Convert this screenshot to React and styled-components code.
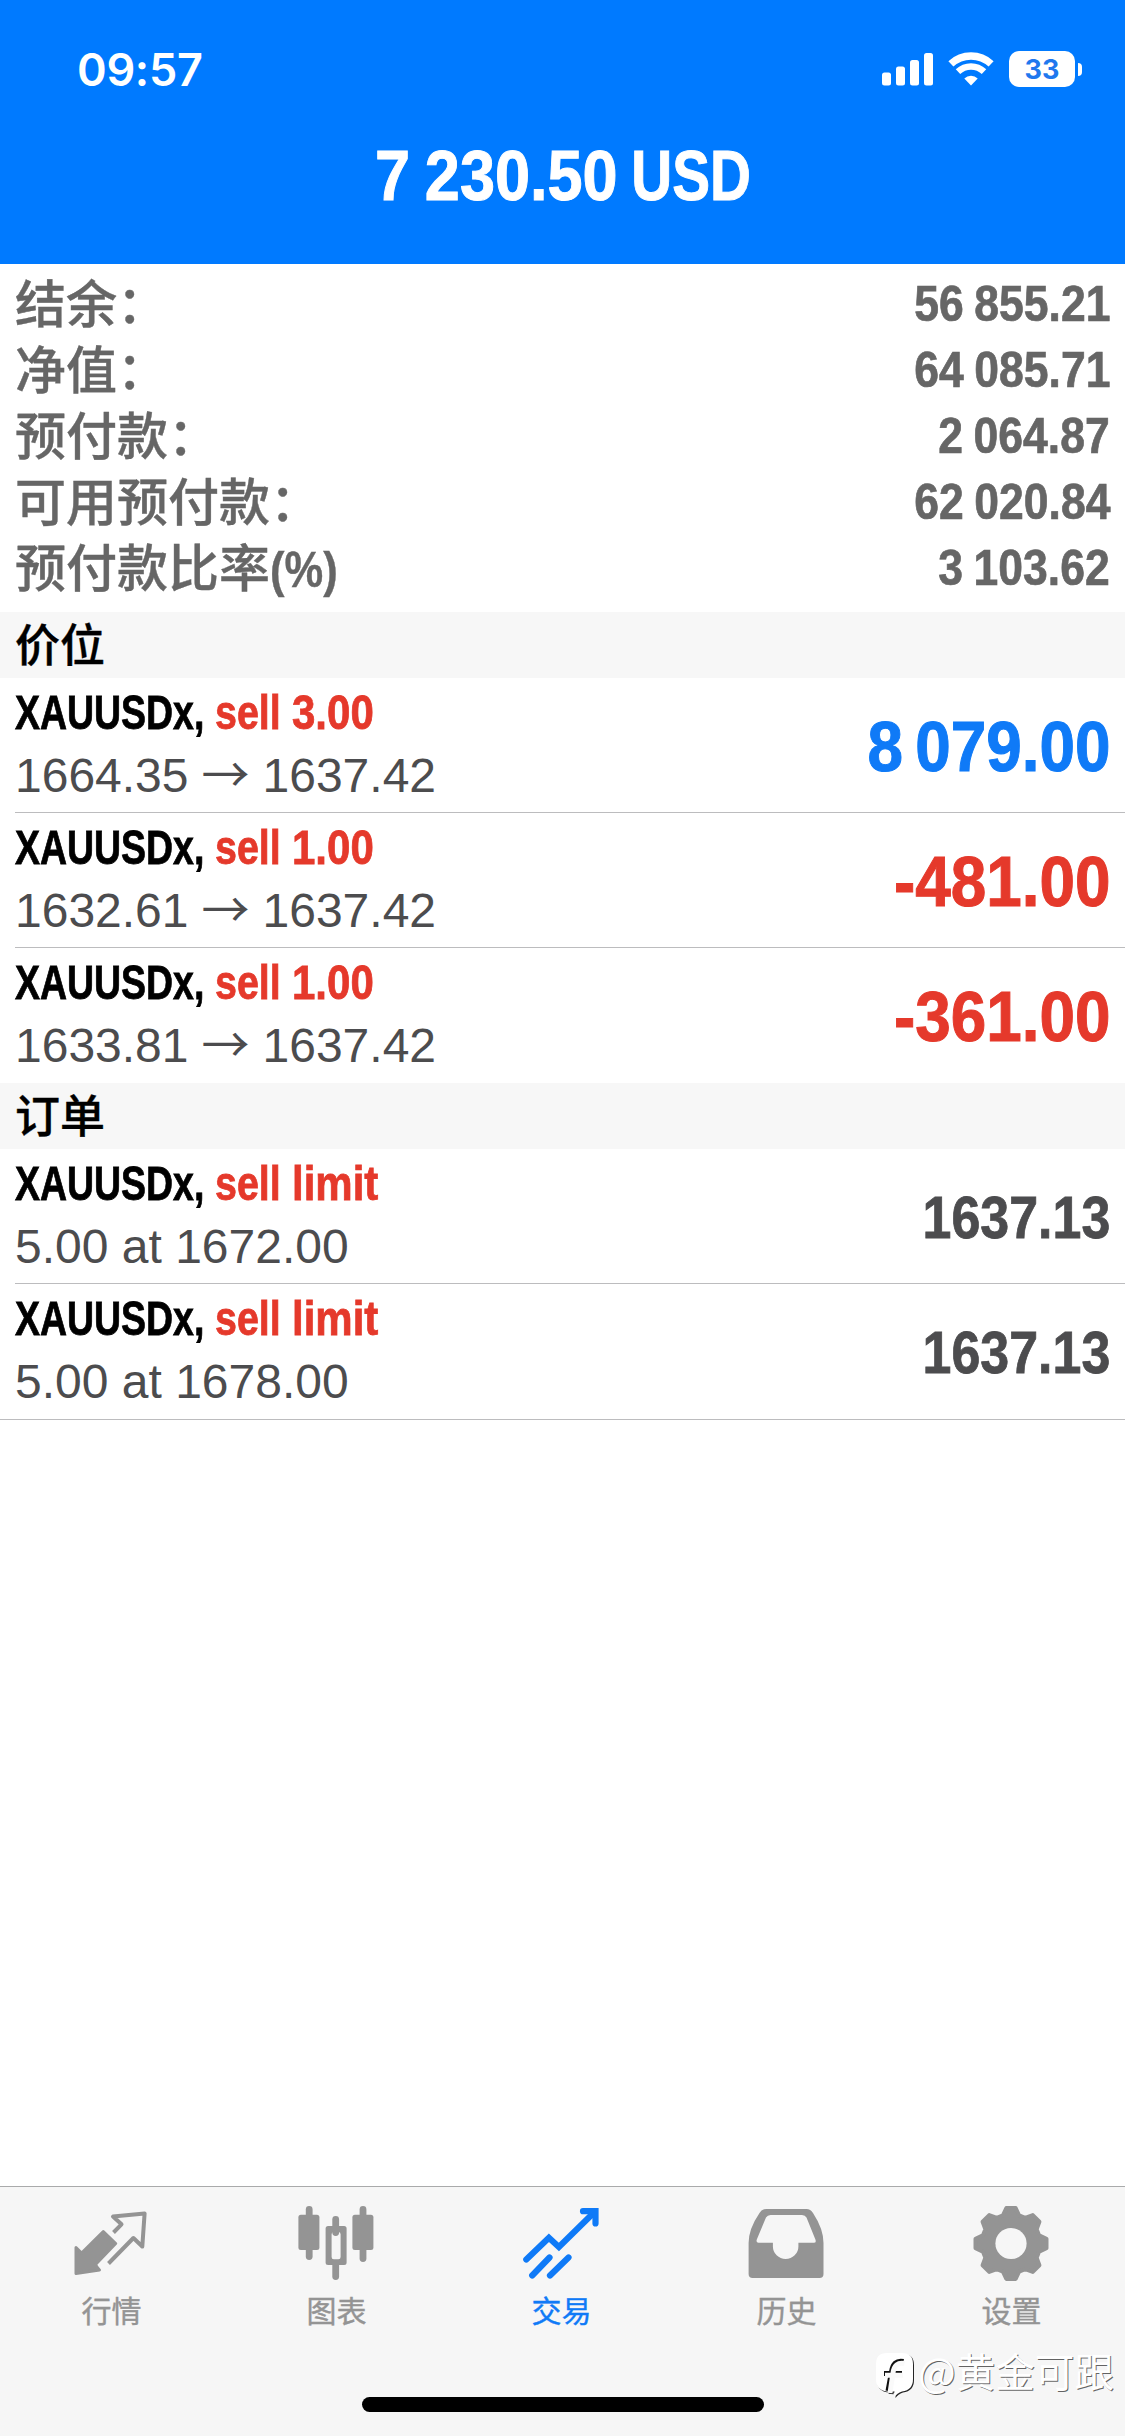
import React from "react";
import styled, { createGlobalStyle } from "styled-components";

const Colors = {
  header: "#007aff",
  blue: "#0f7af7",
  red: "#e5392b",
  label: "#666666",
  text: "#4c4c4e",
  line: "#bcbcbe",
  section: "#f7f7f7",
  tabbar: "#f6f6f6",
  tab: "#949494",
};

const summary = [
  { label: "结余：", value: "56 855.21" },
  { label: "净值：", value: "64 085.71" },
  { label: "预付款：", value: "2 064.87" },
  { label: "可用预付款：", value: "62 020.84" },
  { label: "预付款比率", suffix: "(%)", value: "3 103.62" },
];

const positions = [
  { id: 1, volume: "3.00", open: "1664.35", price: "1637.42", profit: "8 079.00" },
  { id: 2, volume: "1.00", open: "1632.61", price: "1637.42", profit: "-481.00" },
  { id: 3, volume: "1.00", open: "1633.81", price: "1637.42", profit: "-361.00" },
];

const orders = [
  { id: 1, detail: "5.00 at 1672.00", price: "1637.13" },
  { id: 2, detail: "5.00 at 1678.00", price: "1637.13" },
];

// outline of the settings gear, eight teeth around (39, 40.5)
const gearPoints = Array.from({ length: 8 })
  .flatMap((_, i) =>
    [
      [-16, 29.3],
      [-7.5, 35.8],
      [7.5, 35.8],
      [16, 29.3],
    ].map(([offset, r]) => {
      const a = ((i * 45 + offset) * Math.PI) / 180;
      return `${(39 + r * Math.sin(a)).toFixed(2)},${(40.5 - r * Math.cos(a)).toFixed(2)}`;
    })
  )
  .join(" ");

function QuotesIcon() {
  return (
    <TabIcon viewBox="0 0 80 80">
      <path
        d="M4 44.5 L9.6 50 L31.3 28.5 L43.7 40.5 L24 61 Q23.5 63 27.5 67 L4 70.5 Z"
        fill="currentColor"
        stroke="currentColor"
        strokeWidth="3"
        strokeLinejoin="round"
      />
      <path
        d="M41.5 29.5 L49.5 21.3 L41 13.5 L72.6 10.5 L70.3 43.5 L61.4 35 L36.5 60.5"
        fill="none"
        stroke="currentColor"
        strokeWidth="4"
        strokeLinejoin="round"
      />
    </TabIcon>
  );
}

function ChartIcon() {
  return (
    <TabIcon viewBox="0 0 80 80" fill="currentColor">
      <rect x="8.8" y="3" width="6.8" height="54" rx="3.4" />
      <rect x="1.4" y="11.8" width="21" height="35.2" rx="2.5" />
      <rect x="35.3" y="13" width="6.8" height="20" rx="3.4" />
      <rect x="35.3" y="57" width="6.8" height="20" rx="3.4" />
      <path
        fillRule="evenodd"
        d="M31.1 23h16a2.5 2.5 0 0 1 2.5 2.5v34a2.5 2.5 0 0 1-2.5 2.5h-16a2.5 2.5 0 0 1-2.5-2.5v-34a2.5 2.5 0 0 1 2.5-2.5zM36.8 29a2.2 2.2 0 0 0-2.2 2.2v22.9a2.2 2.2 0 0 0 2.2 2.2h4.6a2.2 2.2 0 0 0 2.2-2.2V31.2a2.2 2.2 0 0 0-2.2-2.2z"
      />
      <rect x="62.6" y="3" width="6.8" height="56" rx="3.4" />
      <rect x="55.4" y="11.8" width="21" height="35.2" rx="2.5" />
    </TabIcon>
  );
}

function TradeIcon() {
  return (
    <TabIcon
      viewBox="0 0 80 80"
      fill="none"
      stroke="currentColor"
      strokeWidth="6.2"
      strokeLinecap="round"
    >
      <path d="M4.3 56.5 L26.9 34.8 L36.9 44 L72.5 9" />
      <path d="M61 8.2 H73.5 V20.5" />
      <path d="M10.2 72.5 L27.5 54.5" />
      <path d="M28 72.5 L46.500 54.5" />
    </TabIcon>
  );
}

function HistoryIcon() {
  return (
    <TabIcon viewBox="0 0 80 80" fill="currentColor">
      <path
        fillRule="evenodd"
        d="M20 6 H59.5 Q63.5 6 66 10 Q76.5 26 76.5 40 V71 Q76.5 75 72.5 75 H5.6 Q1.6 75 1.6 71 V40 Q1.6 26 12.5 10 Q15 6 19.5 6 Z M23.5 12 Q20.5 12 19 14.5 L9.8 36.5 Q8.8 39.8 11.5 39.8 H25.9 V43.5 A12.75 12.5 0 0 0 51.4 43.5 V39.8 H66.8 Q69.6 39.8 68.4 36.5 L59.5 14.5 Q58.2 12 55 12 Z"
      />
    </TabIcon>
  );
}

function SettingsIcon() {
  return (
    <TabIcon viewBox="0 0 80 80">
      <polygon
        points={gearPoints}
        fill="currentColor"
        stroke="currentColor"
        strokeWidth="4"
        strokeLinejoin="round"
      />
      <circle cx="39" cy="40.5" r="15.6" fill={Colors.tabbar} />
    </TabIcon>
  );
}

const tabs = [
  { label: "行情", Icon: QuotesIcon },
  { label: "图表", Icon: ChartIcon },
  { label: "交易", Icon: TradeIcon, active: true },
  { label: "历史", Icon: HistoryIcon },
  { label: "设置", Icon: SettingsIcon },
];

function StatusBar() {
  return (
    <StyledStatusBar>
      <Clock>09:57</Clock>
      <StatusIcons>
        <svg width="52" height="36" viewBox="0 0 52 36" fill="white">
          <rect x="0" y="21.5" width="9" height="13" rx="2.5" />
          <rect x="14" y="15.5" width="9" height="19" rx="2.5" />
          <rect x="28" y="9" width="9" height="25.5" rx="2.5" />
          <rect x="42" y="2" width="9" height="32.5" rx="2.5" />
        </svg>
        <svg width="46" height="36" viewBox="0 0 46 36" fill="none" stroke="white">
          <path d="M2.9 12.9 A29.5 29.5 0 0 1 43.1 12.9" strokeWidth="7.4" />
          <path d="M10 20.6 A19 19 0 0 1 36 20.6" strokeWidth="6.5" />
          <path d="M23 34.5 L16.3 27.4 A9.8 9.8 0 0 1 29.7 27.4 Z" fill="white" stroke="none" />
        </svg>
        <Battery>
          <BatteryLevel>33</BatteryLevel>
          <BatteryTip />
        </Battery>
      </StatusIcons>
    </StyledStatusBar>
  );
}

function TradeRow({ action, amount, detail, value, last, full }) {
  return (
    <StyledRow $full={full}>
      <RowBody $line={!last && !full}>
        <RowInfo>
          <RowTitle>
            <RowSymbol>XAUUSDx,</RowSymbol>
            <RowSide>{action}</RowSide>
            <RowAmount>{amount}</RowAmount>
          </RowTitle>
          <RowDetail>{detail}</RowDetail>
        </RowInfo>
        {value}
      </RowBody>
    </StyledRow>
  );
}

export default function App() {
  return (
    <Screen>
      <GlobalStyle />
      <Header>
        <StatusBar />
        <HeaderTitle>
          <HeaderAmount>7 230.50</HeaderAmount>
          <HeaderCurrency>USD</HeaderCurrency>
        </HeaderTitle>
      </Header>

      <Summary>
        {summary.map((item) => (
          <SummaryRow key={item.label}>
            <SummaryLabel>
              {item.label}
              {item.suffix && <SummarySuffix>{item.suffix}</SummarySuffix>}
            </SummaryLabel>
            <SummaryValue>{item.value}</SummaryValue>
          </SummaryRow>
        ))}
      </Summary>

      <SectionTitle>价位</SectionTitle>
      {positions.map((item, i) => (
        <TradeRow
          key={item.id}
          action="sell"
          amount={item.volume}
          detail={
            <>
              {item.open}
              <Arrow>→</Arrow>
              {item.price}
            </>
          }
          value={<Profit $loss={item.profit.startsWith("-")}>{item.profit}</Profit>}
          last={i === positions.length - 1}
        />
      ))}

      <SectionTitle>订单</SectionTitle>
      {orders.map((item, i) => (
        <TradeRow
          key={item.id}
          action="sell"
          amount="limit"
          detail={item.detail}
          value={<OrderPrice>{item.price}</OrderPrice>}
          full={i === orders.length - 1}
        />
      ))}

      <Spacer />

      <Footer>
        <TabBar>
          {tabs.map(({ label, Icon, active }) => (
            <Tab key={label} $active={active}>
              <Icon />
              <TabLabel>{label}</TabLabel>
            </Tab>
          ))}
        </TabBar>
        <HomeIndicator />
        <Watermark>
          <WatermarkLogo viewBox="0 0 42 48">
            <path
              d="M12 1 H27 Q38 1 38 12 V27 Q38 38 27 39.5 Q22 41 19.5 45 V39.5 H12 Q1 38 1 27 V12 Q1 1 12 1 Z"
              fill="white"
            />
            <g fill="none" strokeWidth="5">
              <path d="M28.5 9.5 Q18 7.5 16.5 20 L13 39 M9 21.5 H27" stroke="#111" />
              <path d="M29.5 11.5 Q19.5 9.5 18 21 L15 41 M10 23.2 H28" stroke="#fafafa" />
            </g>
          </WatermarkLogo>
          @黄金可跟
        </Watermark>
      </Footer>
    </Screen>
  );
}

const GlobalStyle = createGlobalStyle`
* { box-sizing: border-box; }
body {
  margin: 0;
  background-color: white;
  font-family: "Liberation Sans", "Noto Sans CJK SC", sans-serif;
}
svg { display: block; }
`;

const Screen = styled.div`
display: flex;
flex-direction: column;
width: 1125px;
height: 2436px;
overflow: hidden;
background-color: white;
`;

const Header = styled.header`
height: 264px;
background-color: ${Colors.header};
`;
const StyledStatusBar = styled.div`
display: flex;
justify-content: space-between;
align-items: flex-start;
height: 136px;
padding: 51px 43px 0 77px;
`;
const Clock = styled.span`
color: white;
font: 600 45px/37px Inter, sans-serif;
letter-spacing: -0.3px;
`;
const StatusIcons = styled.div`
display: flex;
gap: 14px;
`;
const Battery = styled.div`
display: flex;
align-items: center;
gap: 3px;
margin-left: 1px;
`;
const BatteryLevel = styled.span`
width: 66px;
height: 36px;
border-radius: 10px;
background-color: white;
color: #1f78ee;
font: 700 27px/37px Inter, sans-serif;
text-align: center;
`;
const BatteryTip = styled.span`
width: 4px;
height: 13px;
border-radius: 0 5px 5px 0;
background-color: white;
`;
const HeaderTitle = styled.h1`
display: flex;
justify-content: space-between;
width: 376px;
margin: 0 auto;
color: white;
font-size: 70px;
font-weight: 700;
line-height: 80px;
white-space: nowrap;
-webkit-text-stroke: 1px;
`;
const HeaderAmount = styled.span`
transform: scaleX(0.9);
transform-origin: left;
word-spacing: -3px;
width: 256px;
`;
const HeaderCurrency = styled.span`
display: flex;
justify-content: flex-end;
width: 120px;
transform: scaleX(0.81);
transform-origin: right;
`;

const Summary = styled.section`
height: 348px;
padding: 7px 15px 0 15px;
`;
const SummaryRow = styled.div`
display: flex;
justify-content: space-between;
height: 66px;
color: ${Colors.label};
line-height: 66px;
`;
const SummaryLabel = styled.span`
display: flex;
padding-top: 2px;
font-size: 51px;
font-weight: 500;
-webkit-text-stroke: 0.4px;
`;
const SummarySuffix = styled.span`
font-size: 50px;
font-weight: 700;
transform: scaleX(0.87);
transform-origin: left;
`;
const SummaryValue = styled.span`
font-size: 50px;
font-weight: 700;
transform: scaleX(0.89);
transform-origin: right;
word-spacing: -2px;
-webkit-text-stroke: 0.7px;
`;

const SectionTitle = styled.h2`
flex: none;
height: 66px;
margin: 0;
padding-left: 15px;
background-color: ${Colors.section};
color: black;
font-size: 45px;
font-weight: 500;
line-height: 70px;
-webkit-text-stroke: 0.4px;
`;

const StyledRow = styled.div`
flex: none;
height: ${(props) => (props.$full ? "136px" : "135px")};
padding-left: 15px;
border-bottom: ${(props) => (props.$full ? `1px solid ${Colors.line}` : "none")};
`;
const RowBody = styled.div`
display: flex;
justify-content: space-between;
height: 100%;
padding-right: 15px;
border-bottom: 1px solid ${(props) => (props.$line ? Colors.line : "transparent")};
`;
const RowInfo = styled.div`
padding-top: 4px;
`;
const RowTitle = styled.div`
display: flex;
font-size: 48px;
font-weight: 700;
line-height: 62px;
-webkit-text-stroke: 0.8px;
`;
const RowSymbol = styled.span`
width: 200px;
color: black;
transform: scaleX(0.78);
transform-origin: left;
white-space: nowrap;
`;
const RowSide = styled.span`
width: 77px;
color: ${Colors.red};
transform: scaleX(0.82);
transform-origin: left;
`;
const RowAmount = styled.span`
color: ${Colors.red};
transform: scaleX(0.875);
transform-origin: left;
`;
const RowDetail = styled.div`
display: flex;
color: ${Colors.text};
font-size: 48px;
line-height: 63px;
`;
const Arrow = styled.span`
width: 74px;
font-family: "Noto Sans CJK SC", sans-serif;
line-height: 55px;
text-align: center;
`;
const Profit = styled.span`
color: ${(props) => (props.$loss ? Colors.red : Colors.blue)};
font-size: 70px;
font-weight: 700;
line-height: 139px;
transform: scaleX(0.912);
transform-origin: right;
word-spacing: -6px;
-webkit-text-stroke: 1px;
`;
const OrderPrice = styled.span`
color: ${Colors.text};
font-size: 59px;
font-weight: 700;
line-height: 139px;
transform: scaleX(0.88);
transform-origin: right;
-webkit-text-stroke: 0.8px;
`;

const Spacer = styled.div`
flex: 1;
`;

const Footer = styled.footer`
position: relative;
flex: none;
height: 250px;
border-top: 1px solid #a9aaab;
background-color: ${Colors.tabbar};
`;
const TabBar = styled.nav`
display: flex;
height: 210px;
`;
const Tab = styled.div`
display: flex;
flex: 1;
flex-direction: column;
align-items: center;
padding: 16px 2px 0 0;
color: ${(props) => (props.$active ? Colors.blue : Colors.tab)};
`;
const TabIcon = styled.svg`
width: 80px;
height: 80px;
`;
const TabLabel = styled.span`
margin-top: 9px;
font-size: 30px;
line-height: 40px;
-webkit-text-stroke: 0.4px;
`;
const HomeIndicator = styled.div`
width: 402px;
height: 15px;
margin: 0 auto;
border-radius: 8px;
background-color: black;
`;
const Watermark = styled.div`
position: absolute;
top: 159px;
right: 11px;
display: flex;
gap: 1px;
color: white;
font-family: "Noto Sans CJK SC", sans-serif;
font-size: 39.6px;
font-weight: 400;
line-height: 48px;
text-shadow: 1px 1px 0 rgba(0, 0, 0, 0.6);
`;
const WatermarkLogo = styled.svg`
width: 42px;
height: 48px;
margin-top: 6px;
filter: drop-shadow(1px 1px 0.5px rgba(0, 0, 0, 0.85));
`;
